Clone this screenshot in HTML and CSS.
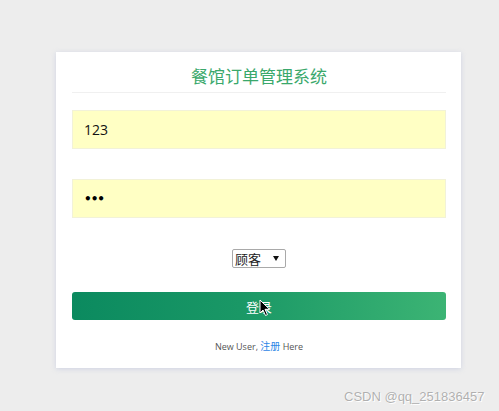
FILE: index.html
```html
<!DOCTYPE html>
<html lang="zh">
<head>
<meta charset="utf-8">
<title>餐馆订单管理系统</title>
<link rel="stylesheet" href="styles.css">
</head>
<body>
<div class="page">
  <form class="card">
    <h1 class="title">餐馆订单管理系统</h1>
    <div class="field"><input class="input" type="text" value="123"></div>
    <div class="field"><input class="input input-pw" type="password" value="123"></div>
    <div class="role">
      <select class="select"><option>顾客</option><option>管理员</option></select>
    </div>
    <button class="btn" type="button">登录</button>
    <p class="note">New User, <a class="link" href="#">注册</a> Here</p>
  </form>
  <div class="watermark">CSDN @qq_251836457</div>
  <svg class="cursor" width="12" height="18" viewBox="0 0 12 18"><path d="M1 1 L1 14 L4 11 L6.5 16.5 L8.5 15.6 L6 10.3 L10.5 10.3 Z" fill="#000" stroke="#fff" stroke-width="1"/></svg>
</div>
</body>
</html>
```

FILE: styles.css
```css
* { box-sizing: border-box; }
html, body { margin: 0; padding: 0; }
body {
  background: #ededed;
  font-family: "Open Sans", "Noto Sans CJK SC", sans-serif;
  width: 499px;
  height: 411px;
  overflow: hidden;
}
.page {
  position: relative;
  width: 499px;
  height: 411px;
  padding: 52px 0 0 56px;
}
.card {
  width: 405px;
  height: 316px;
  background: #fff;
  box-shadow: 0 1px 5px rgba(170, 180, 215, 0.45);
  padding: 12px 15px 0 16px;
}
.title {
  margin: 0;
  font-family: "Noto Sans CJK SC", sans-serif;
  font-weight: 400;
  font-size: 17px;
  line-height: 23px;
  color: #3aa86b;
  text-align: center;
  padding-bottom: 5px;
  border-bottom: 1px solid #f0f0f0;
}
.field { margin-top: 17px; }
.field + .field { margin-top: 30px; }
.input {
  display: block;
  width: 100%;
  height: 39px;
  border: 1px solid #f2f2d8;
  background: #ffffc4;
  padding: 0 11px;
  font-family: "Open Sans", sans-serif;
  font-size: 14px;
  color: #111;
  outline: none;
}
.input-pw {
  font-family: "DejaVu Sans", sans-serif;
  font-size: 12px;
  font-weight: bold;
  letter-spacing: -1px;
  color: #000;
}
.role {
  display: flex;
  justify-content: center;
  margin-top: 31px;
}
.select {
  -webkit-appearance: none;
  appearance: none;
  width: 54px;
  height: 19px;
  font-family: "Noto Sans CJK SC", sans-serif;
  font-size: 13px;
  line-height: 17px;
  color: #222;
  background: #fff url("data:image/svg+xml;utf8,<svg xmlns='http://www.w3.org/2000/svg' width='6' height='5'><path d='M0 0 L6 0 L3 5 Z' fill='%23111'/></svg>") no-repeat right 6px center;
  border: 1px solid #a9a9a9;
  border-radius: 2px;
  padding: 0 2px;
}
.btn {
  display: block;
  width: 100%;
  height: 28px;
  margin-top: 24px;
  border: 0;
  border-radius: 3px;
  background: linear-gradient(90deg, #0b8a5f 0%, #1a9866 45%, #3cb474 100%);
  color: #fff;
  font-family: "Noto Sans CJK SC", sans-serif;
  font-size: 13px;
}
.note {
  margin: 18px 0 0;
  text-align: center;
  font-size: 9px;
  color: #555;
}
.link { color: #2f86e6; text-decoration: none; font-family: "Noto Sans CJK SC", sans-serif; font-size: 10px; }
.watermark {
  position: absolute;
  left: 344px;
  top: 389px;
  white-space: nowrap;
  font-family: "Liberation Sans", Arial, sans-serif;
  font-size: 13px;
  color: #b0b0b0;
  text-shadow: 0 0 1px #fff, 1px 1px 0 #fff;
}
.cursor {
  position: absolute;
  left: 259px;
  top: 299px;
}
```
